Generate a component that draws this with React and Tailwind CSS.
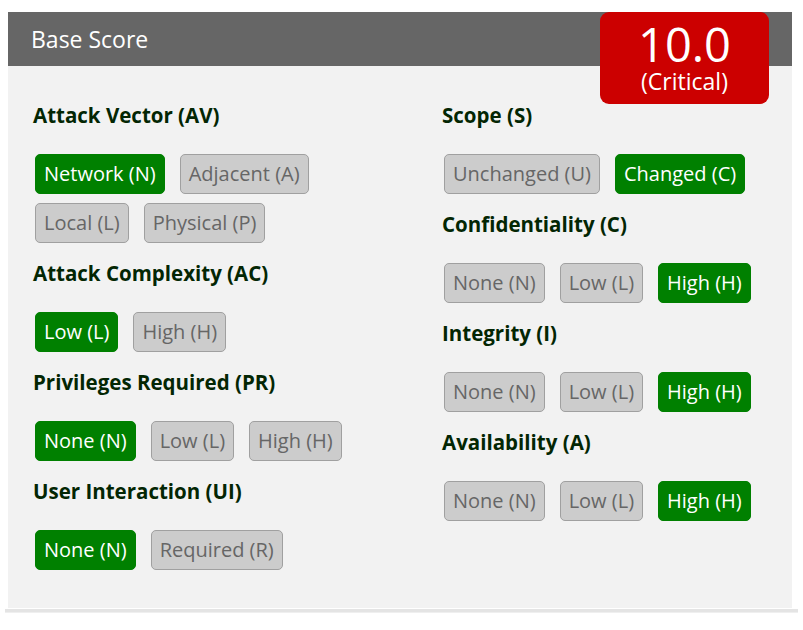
import React from "react";

const left = [
  { title: "Attack Vector (AV)", options: ["Network (N)", "Adjacent (A)", "Local (L)", "Physical (P)"], sel: 0 },
  { title: "Attack Complexity (AC)", options: ["Low (L)", "High (H)"], sel: 0 },
  { title: "Privileges Required (PR)", options: ["None (N)", "Low (L)", "High (H)"], sel: 0 },
  { title: "User Interaction (UI)", options: ["None (N)", "Required (R)"], sel: 0 },
];

const right = [
  { title: "Scope (S)", options: ["Unchanged (U)", "Changed (C)"], sel: 1 },
  { title: "Confidentiality (C)", options: ["None (N)", "Low (L)", "High (H)"], sel: 2 },
  { title: "Integrity (I)", options: ["None (N)", "Low (L)", "High (H)"], sel: 2 },
  { title: "Availability (A)", options: ["None (N)", "Low (L)", "High (H)"], sel: 2 },
];

const Metric = ({ metric, first }) => (
  <div className={first ? "" : "mt-[16px]"}>
    <h3 className="h-[28px] leading-[28px] text-[20.5px] font-bold text-[#032603]">
      {metric.title}
    </h3>
    <div className="mt-[25px] pl-[2px] flex flex-wrap gap-x-[15px] gap-y-[9px] max-w-[340px]">
      {metric.options.map((opt, i) =>
        i === metric.sel ? (
          <button
            key={opt}
            className="h-[40px] px-[8px] rounded-[5px] border border-[#008000] bg-[#008000] text-white text-[20px]"
          >
            {opt}
          </button>
        ) : (
          <button
            key={opt}
            className="h-[40px] px-[8px] rounded-[5px] border border-[#a0a0a0] bg-[#cccccc] text-[#666666] text-[20px]"
          >
            {opt}
          </button>
        )
      )}
    </div>
  </div>
);

export default function App() {
  return (
    <div className="w-[803px] min-h-[630px] bg-white pt-[12px] font-['Open_Sans',sans-serif]">
      <div className="relative mx-[8px] w-[784px]">
        <div className="h-[54px] bg-[#666666] pl-[23px] flex items-center text-[23px] text-white">
          Base Score
        </div>
        <div className="absolute top-0 right-[23px] w-[169px] h-[92px] rounded-[9px] bg-[#cc0000] text-white flex flex-col items-center justify-center">
          <div className="text-[47px] leading-[46px]">10.0</div>
          <div className="text-[23px] leading-[28px]">(Critical)</div>
        </div>
        <div className="grid grid-cols-[409px_1fr] h-[542px] bg-[#f2f2f2] pl-[25px] pt-[35px]">
          <div>
            {left.map((m, i) => (
              <Metric key={m.title} metric={m} first={i === 0} />
            ))}
          </div>
          <div>
            {right.map((m, i) => (
              <Metric key={m.title} metric={m} first={i === 0} />
            ))}
          </div>
        </div>
      </div>
      <div className="mx-[5px] mt-[1px] h-[4px] bg-[#e4e4e4] border-b border-[#efefef]"></div>
    </div>
  );
}
